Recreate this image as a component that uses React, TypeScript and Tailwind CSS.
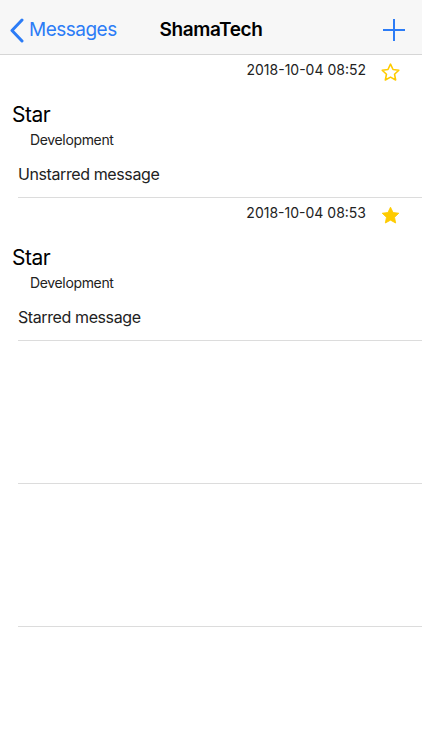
import * as React from "react";

type Message = {
  time: string;
  title: string;
  category: string;
  body: string;
  starred: boolean;
};

const messages: Message[] = [
  { time: "2018-10-04 08:52", title: "Star", category: "Development", body: "Unstarred message", starred: false },
  { time: "2018-10-04 08:53", title: "Star", category: "Development", body: "Starred message", starred: true },
];

const font = { fontFamily: "Inter, 'Liberation Sans', sans-serif" };

function StarIcon({ filled }: { filled: boolean }) {
  return (
    <svg width="21" height="21" viewBox="0 0 24 24" aria-hidden>
      <path
        d="M12 2.5l2.9 6.1 6.6.8-4.9 4.6 1.3 6.6L12 17.3l-5.9 3.3 1.3-6.6-4.9-4.6 6.6-.8z"
        fill={filled ? "#fecb00" : "none"}
        stroke="#fecb00"
        strokeWidth={filled ? 1 : 1.8}
        strokeLinejoin="round"
      />
    </svg>
  );
}

function NavBar() {
  return (
    <div className="relative flex h-[55px] items-center border-b border-[#d6d6d6] bg-[#f7f7f7] pt-[6px]">
      <button type="button" className="flex items-center pl-[9px] text-[#2c7cf6]">
        <svg width="16" height="25" viewBox="0 0 16 25" aria-hidden>
          <path d="M13 2L3 12.5 13 23" fill="none" stroke="#2c7cf6" strokeWidth="3" strokeLinecap="round" strokeLinejoin="round" />
        </svg>
        <span className="ml-[4px] text-[19px] tracking-[-0.5px]">Messages</span>
      </button>
      <div className="absolute left-1/2 -translate-x-1/2 text-[19px] font-semibold tracking-[-0.4px] text-black">ShamaTech</div>
      <button type="button" className="ml-auto mr-[17px]">
        <svg width="22" height="22" viewBox="0 0 22 22" aria-hidden>
          <path d="M11 0v22M0 11h22" stroke="#2c7cf6" strokeWidth="2" />
        </svg>
      </button>
    </div>
  );
}

function MessageRow({ m }: { m?: Message }) {
  return (
    <div className="h-[143px] pl-[18px]">
      <div className="flex h-full flex-col border-b border-[#dcdcdc]">
        {m ? (
          <>
            <div className="flex h-[29px] items-center justify-end">
              <span className="text-[14px] text-[#222]">{m.time}</span>
              <span className="ml-[14px] mr-[21px] mt-[6px] flex">
                <StarIcon filled={m.starred} />
              </span>
            </div>
            <div className="-ml-[6px] mt-[16px] text-[21px] leading-[30px] tracking-[-0.5px] text-black">{m.title}</div>
            <div className="ml-[12px] mt-[1px] text-[14px] leading-[18px] tracking-[-0.35px] text-[#222]">{m.category}</div>
            <div className="mt-[14px] text-[16px] leading-[22px] tracking-[-0.4px] text-[#222]">{m.body}</div>
          </>
        ) : null}
      </div>
    </div>
  );
}

export default function App() {
  return (
    <div className="h-[750px] w-[422px] overflow-hidden bg-white" style={font}>
      <NavBar />
      {messages.map((m, i) => (
        <MessageRow key={i} m={m} />
      ))}
      <MessageRow />
      <MessageRow />
    </div>
  );
}
